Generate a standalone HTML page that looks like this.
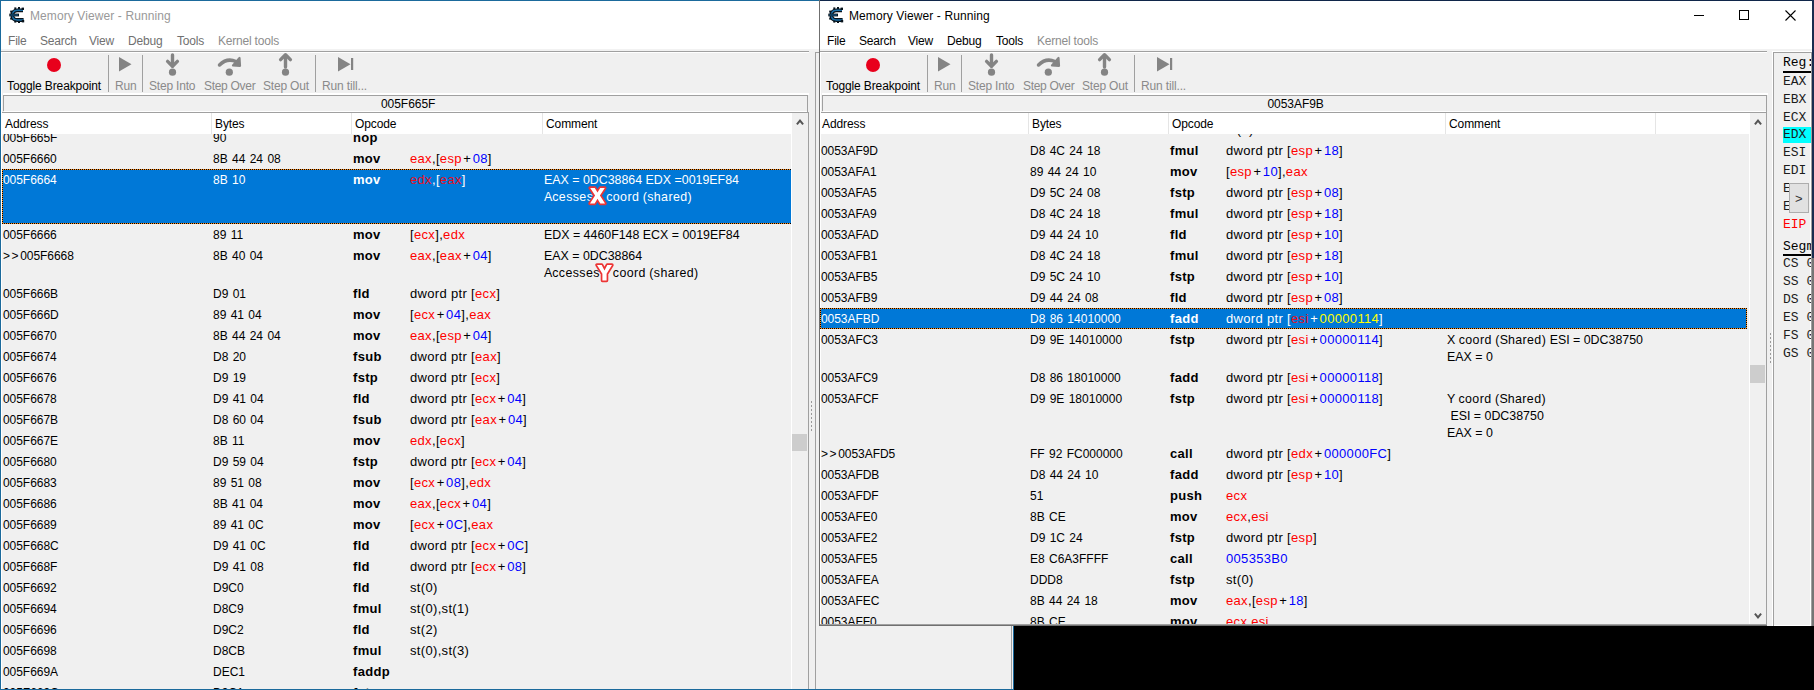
<!DOCTYPE html><html><head><meta charset="utf-8"><style>
html,body{margin:0;padding:0}
body{width:1814px;height:690px;overflow:hidden;position:relative;background:#000}
.a{position:absolute}
.t{position:absolute;white-space:pre;line-height:20px}
.s{font-family:"Liberation Sans",sans-serif}
.m{font-family:"Liberation Mono",monospace}
.pl{margin:0 1.5px}
</style></head><body>
<div class="a" style="left:0;top:0;width:1014px;height:690px;background:#f0f0f0"></div>
<div class="a" style="left:1px;top:1px;width:1012px;height:48px;background:#ffffff;"></div>
<div class="a" style="left:1px;top:49px;width:1012px;height:2px;background:#f2f2f2;"></div>
<svg class="a" style="left:9px;top:7px" width="16" height="16" viewBox="0 0 16 16"><g fill="none">
<path d="M14 3.3 H8.5 C5 3.3 3.4 5.4 3.4 8.2 C3.4 11 5 13 8.5 13 H14.6" stroke="#08131c" stroke-width="3.8"/>
<path d="M14 3.3 H8.5 C5 3.3 3.4 5.4 3.4 8.2 C3.4 11 5 13 8.5 13 H14.6" stroke="#1b70a8" stroke-width="1.6"/>
<path d="M0.3 8 H10" stroke="#08131c" stroke-width="2.8"/><path d="M1.2 8 H9" stroke="#1b70a8" stroke-width="0.9"/>
</g><g fill="#08131c"><rect x="5.3" y="0.4" width="2" height="2"/><rect x="9" y="0" width="2" height="2"/><rect x="12.6" y="0.6" width="2.4" height="2.4"/>
<rect x="5.3" y="13.6" width="2" height="2"/><rect x="9" y="14" width="2" height="2"/><rect x="12.8" y="13" width="2.4" height="2.4"/><rect x="1.2" y="3.6" width="2" height="2"/><rect x="1.2" y="10.6" width="2" height="2"/></g></svg>
<div class="t s" style="left:30px;top:6px;font-size:12px;color:#999999;letter-spacing:0.1px;">Memory Viewer - Running</div>
<div class="t s" style="left:8px;top:31px;font-size:12px;color:#707070;letter-spacing:-0.2px;">File</div>
<div class="t s" style="left:40px;top:31px;font-size:12px;color:#707070;letter-spacing:-0.2px;">Search</div>
<div class="t s" style="left:89px;top:31px;font-size:12px;color:#707070;letter-spacing:-0.2px;">View</div>
<div class="t s" style="left:128px;top:31px;font-size:12px;color:#707070;letter-spacing:-0.2px;">Debug</div>
<div class="t s" style="left:177px;top:31px;font-size:12px;color:#707070;letter-spacing:-0.2px;">Tools</div>
<div class="t s" style="left:218px;top:31px;font-size:12px;color:#8d8d8d;letter-spacing:-0.2px;">Kernel tools</div>
<div class="a" style="left:1px;top:51px;width:808px;height:1px;background:#a0a0a0;"></div>
<div class="a" style="left:1px;top:52px;width:808px;height:1px;background:#ffffff;"></div>
<div class="a" style="left:46.5px;top:57.5px;width:14px;height:14px;border-radius:50%;background:#e8001c"></div>
<svg class="a" style="left:100px;top:50px" width="270" height="30" viewBox="100 50 270 30">
<polygon points="119,57 131.5,64.3 119,71.6" fill="#848484"/>
<path d="M172.5 55 V66" stroke="#848484" stroke-width="3.4" stroke-linecap="round"/>
<path d="M167.6 61.4 L172.5 66.3 L177.4 61.4" fill="none" stroke="#848484" stroke-width="3.4" stroke-linecap="round" stroke-linejoin="round"/>
<circle cx="172.5" cy="72.2" r="3.6" fill="#848484"/>
<path d="M219.5 65 Q227 57.5 236 61.5" fill="none" stroke="#848484" stroke-width="3.5" stroke-linecap="round"/>
<polygon points="239.5,58 240,65.8 233,65.5" fill="#848484" stroke="#848484" stroke-width="2.2" stroke-linejoin="round"/>
<circle cx="229.3" cy="72.2" r="3.6" fill="#848484"/>
<path d="M285.5 56 V67" stroke="#848484" stroke-width="3.4" stroke-linecap="round"/>
<path d="M280.6 59.6 L285.5 54.7 L290.4 59.6" fill="none" stroke="#848484" stroke-width="3.4" stroke-linecap="round" stroke-linejoin="round"/>
<circle cx="285.5" cy="72.2" r="3.6" fill="#848484"/>
<polygon points="338,57 350.5,64.3 338,71.6" fill="#848484"/>
<rect x="351" y="58" width="2.2" height="12" fill="#848484"/>
</svg>
<div class="t s" style="left:7px;top:76px;font-size:12px;color:#000;letter-spacing:-0.12px;">Toggle Breakpoint</div>
<div class="t s" style="left:115px;top:76px;font-size:12px;color:#8a8a8a;letter-spacing:-0.2px;">Run</div>
<div class="t s" style="left:149px;top:76px;font-size:12px;color:#8a8a8a;letter-spacing:-0.2px;">Step Into</div>
<div class="t s" style="left:204px;top:76px;font-size:12px;color:#8a8a8a;letter-spacing:-0.3px;">Step Over</div>
<div class="t s" style="left:263px;top:76px;font-size:12px;color:#8a8a8a;letter-spacing:-0.2px;">Step Out</div>
<div class="t s" style="left:322px;top:76px;font-size:12px;color:#8a8a8a;letter-spacing:-0.15px;">Run till...</div>
<div class="a" style="left:108px;top:55px;width:1px;height:37px;background:#a0a0a0;"></div>
<div class="a" style="left:142px;top:55px;width:1px;height:37px;background:#a0a0a0;"></div>
<div class="a" style="left:315px;top:55px;width:1px;height:37px;background:#a0a0a0;"></div>
<div class="a" style="left:1px;top:53px;width:1px;height:636px;background:#ffffff;"></div>
<div class="a" style="left:3px;top:93px;width:806px;height:2px;background:#ffffff;"></div>
<div class="a" style="left:3px;top:95px;width:805px;height:1px;background:#a0a0a0;"></div>
<div class="a" style="left:3px;top:95px;width:1px;height:16px;background:#a0a0a0;"></div>
<div class="a" style="left:807px;top:95px;width:1px;height:17px;background:#a0a0a0;"></div>
<div class="a" style="left:4px;top:111px;width:803px;height:1px;background:#ffffff;"></div>
<div class="t s" style="left:381px;top:94px;font-size:12px;color:#000;letter-spacing:-0.05px;">005F665F</div>
<div class="a" style="left:2px;top:112px;width:807px;height:1px;background:#a0a0a0;"></div>
<div class="a" style="left:808px;top:112px;width:1px;height:577px;background:#a0a0a0;"></div>
<div class="a" style="left:2px;top:113px;width:789px;height:21px;background:#ffffff;"></div>
<div class="a" style="left:211px;top:113px;width:1px;height:21px;background:#e5e5e5;"></div>
<div class="a" style="left:351px;top:113px;width:1px;height:21px;background:#e5e5e5;"></div>
<div class="a" style="left:542px;top:113px;width:1px;height:21px;background:#e5e5e5;"></div>
<div class="t s" style="left:5px;top:114px;font-size:12px;color:#000;letter-spacing:-0.1px;">Address</div>
<div class="t s" style="left:215px;top:114px;font-size:12px;color:#000;letter-spacing:-0.1px;">Bytes</div>
<div class="t s" style="left:355px;top:114px;font-size:12px;color:#000;letter-spacing:-0.1px;">Opcode</div>
<div class="t s" style="left:546px;top:114px;font-size:12px;color:#000;letter-spacing:-0.1px;">Comment</div>
<div class="a" style="left:791px;top:113px;width:1px;height:576px;background:#ffffff;"></div>
<div class="a" style="left:792px;top:113px;width:16px;height:576px;background:#f0f0f0;"></div>
<svg class="a" style="left:796px;top:118px" width="8" height="8"><path d="M0.9 6.3 L4 2.6 L7.1 6.3" fill="none" stroke="#555" stroke-width="2"/></svg>
<div class="a" style="left:792px;top:434px;width:15px;height:17px;background:#cdcdcd;"></div>
<div class="a" style="left:811px;top:401px;width:1px;height:2px;background:#9a9a9a;"></div>
<div class="a" style="left:811px;top:405px;width:1px;height:2px;background:#9a9a9a;"></div>
<div class="a" style="left:811px;top:409px;width:1px;height:2px;background:#9a9a9a;"></div>
<div class="a" style="left:811px;top:413px;width:1px;height:2px;background:#9a9a9a;"></div>
<div class="a" style="left:811px;top:417px;width:1px;height:2px;background:#9a9a9a;"></div>
<div class="a" style="left:811px;top:421px;width:1px;height:2px;background:#9a9a9a;"></div>
<div class="a" style="left:811px;top:425px;width:1px;height:2px;background:#9a9a9a;"></div>
<div class="a" style="left:811px;top:429px;width:1px;height:2px;background:#9a9a9a;"></div>
<div class="a" style="left:815px;top:52px;width:1px;height:637px;background:#a0a0a0;"></div>
<div class="a" style="left:815px;top:52px;width:198px;height:1px;background:#a0a0a0;"></div>
<div class="a" style="left:1011px;top:52px;width:1px;height:637px;background:#a0a0a0;"></div>
<div class="a" style="left:2px;top:134px;width:789px;height:555px;overflow:hidden;">
<div class="t s" style="left:1px;top:-6px;font-size:12px;color:#000;letter-spacing:-0.05px;">005F665F</div>
<div class="t s" style="left:211px;top:-6px;font-size:12px;color:#000;word-spacing:1px;">90</div>
<div class="t s" style="left:351px;top:-6px;font-size:13px;color:#000;font-weight:bold;letter-spacing:0.3px;">nop</div>
<div class="t s" style="left:1px;top:15px;font-size:12px;color:#000;letter-spacing:-0.05px;">005F6660</div>
<div class="t s" style="left:211px;top:15px;font-size:12px;color:#000;word-spacing:1px;">8B 44 24 08</div>
<div class="t s" style="left:351px;top:15px;font-size:13px;color:#000;font-weight:bold;letter-spacing:0.3px;">mov</div>
<div class="t s" style="left:408px;top:15px;font-size:13px;color:#000;letter-spacing:0.33px;"><span style="color:#ff0000">eax</span>,[<span style="color:#ff0000">esp</span><span class="pl">+</span><span style="color:#0000ff">08</span>]</div>
<div class="a" style="left:0px;top:35px;width:790px;height:55px;background:#0078d7;"></div>
<div class="a" style="left:0px;top:35px;width:790px;height:1px;background:repeating-linear-gradient(90deg,#000 0 1px,#ff8c1a 1px 2px)"></div>
<div class="a" style="left:0px;top:89px;width:790px;height:1px;background:repeating-linear-gradient(90deg,#000 0 1px,#ff8c1a 1px 2px)"></div>
<div class="a" style="left:0px;top:35px;width:1px;height:55px;background:repeating-linear-gradient(180deg,#000 0 1px,#ff8c1a 1px 2px)"></div>
<div class="t s" style="left:1px;top:36px;font-size:12px;color:#fff;letter-spacing:-0.05px;">005F6664</div>
<div class="t s" style="left:211px;top:36px;font-size:12px;color:#fff;word-spacing:1px;">8B 10</div>
<div class="t s" style="left:351px;top:36px;font-size:13px;color:#fff;font-weight:bold;letter-spacing:0.3px;">mov</div>
<div class="t s" style="left:408px;top:36px;font-size:13px;color:#fff;letter-spacing:0.33px;"><span style="color:#e8101e">edx</span>,[<span style="color:#e8101e">eax</span>]</div>
<div class="t s" style="left:542px;top:36px;font-size:12.4px;color:#fff;">EAX = 0DC38864 EDX =0019EF84</div>
<div class="t s" style="left:542px;top:53px;font-size:12.4px;color:#fff;">A<span style="letter-spacing:0.4px">cesses</span><span style="display:inline-block;width:13px"></span><span style="letter-spacing:0.4px">coord</span> <span style="letter-spacing:0.4px">(shared)</span></div>
<div class="t s" style="left:1px;top:91px;font-size:12px;color:#000;letter-spacing:-0.05px;">005F6666</div>
<div class="t s" style="left:211px;top:91px;font-size:12px;color:#000;word-spacing:1px;">89 11</div>
<div class="t s" style="left:351px;top:91px;font-size:13px;color:#000;font-weight:bold;letter-spacing:0.3px;">mov</div>
<div class="t s" style="left:408px;top:91px;font-size:13px;color:#000;letter-spacing:0.33px;">[<span style="color:#ff0000">ecx</span>],<span style="color:#ff0000">edx</span></div>
<div class="t s" style="left:542px;top:91px;font-size:12.4px;color:#000;">EDX = 4460F148 ECX = 0019EF84</div>
<div class="t s" style="left:1px;top:112px;font-size:12px;color:#000;letter-spacing:-0.05px;"><span style="letter-spacing:1.6px">>></span>005F6668</div>
<div class="t s" style="left:211px;top:112px;font-size:12px;color:#000;word-spacing:1px;">8B 40 04</div>
<div class="t s" style="left:351px;top:112px;font-size:13px;color:#000;font-weight:bold;letter-spacing:0.3px;">mov</div>
<div class="t s" style="left:408px;top:112px;font-size:13px;color:#000;letter-spacing:0.33px;"><span style="color:#ff0000">eax</span>,[<span style="color:#ff0000">eax</span><span class="pl">+</span><span style="color:#0000ff">04</span>]</div>
<div class="t s" style="left:542px;top:112px;font-size:12.4px;color:#000;">EAX = 0DC38864</div>
<div class="t s" style="left:542px;top:129px;font-size:12.4px;color:#000;">A<span style="letter-spacing:0.4px">ccesses</span><span style="display:inline-block;width:13px"></span><span style="letter-spacing:0.4px">coord</span> <span style="letter-spacing:0.4px">(shared)</span></div>
<div class="t s" style="left:1px;top:150px;font-size:12px;color:#000;letter-spacing:-0.05px;">005F666B</div>
<div class="t s" style="left:211px;top:150px;font-size:12px;color:#000;word-spacing:1px;">D9 01</div>
<div class="t s" style="left:351px;top:150px;font-size:13px;color:#000;font-weight:bold;letter-spacing:0.3px;">fld</div>
<div class="t s" style="left:408px;top:150px;font-size:13px;color:#000;letter-spacing:0.33px;">dword ptr [<span style="color:#ff0000">ecx</span>]</div>
<div class="t s" style="left:1px;top:171px;font-size:12px;color:#000;letter-spacing:-0.05px;">005F666D</div>
<div class="t s" style="left:211px;top:171px;font-size:12px;color:#000;word-spacing:1px;">89 41 04</div>
<div class="t s" style="left:351px;top:171px;font-size:13px;color:#000;font-weight:bold;letter-spacing:0.3px;">mov</div>
<div class="t s" style="left:408px;top:171px;font-size:13px;color:#000;letter-spacing:0.33px;">[<span style="color:#ff0000">ecx</span><span class="pl">+</span><span style="color:#0000ff">04</span>],<span style="color:#ff0000">eax</span></div>
<div class="t s" style="left:1px;top:192px;font-size:12px;color:#000;letter-spacing:-0.05px;">005F6670</div>
<div class="t s" style="left:211px;top:192px;font-size:12px;color:#000;word-spacing:1px;">8B 44 24 04</div>
<div class="t s" style="left:351px;top:192px;font-size:13px;color:#000;font-weight:bold;letter-spacing:0.3px;">mov</div>
<div class="t s" style="left:408px;top:192px;font-size:13px;color:#000;letter-spacing:0.33px;"><span style="color:#ff0000">eax</span>,[<span style="color:#ff0000">esp</span><span class="pl">+</span><span style="color:#0000ff">04</span>]</div>
<div class="t s" style="left:1px;top:213px;font-size:12px;color:#000;letter-spacing:-0.05px;">005F6674</div>
<div class="t s" style="left:211px;top:213px;font-size:12px;color:#000;word-spacing:1px;">D8 20</div>
<div class="t s" style="left:351px;top:213px;font-size:13px;color:#000;font-weight:bold;letter-spacing:0.3px;">fsub</div>
<div class="t s" style="left:408px;top:213px;font-size:13px;color:#000;letter-spacing:0.33px;">dword ptr [<span style="color:#ff0000">eax</span>]</div>
<div class="t s" style="left:1px;top:234px;font-size:12px;color:#000;letter-spacing:-0.05px;">005F6676</div>
<div class="t s" style="left:211px;top:234px;font-size:12px;color:#000;word-spacing:1px;">D9 19</div>
<div class="t s" style="left:351px;top:234px;font-size:13px;color:#000;font-weight:bold;letter-spacing:0.3px;">fstp</div>
<div class="t s" style="left:408px;top:234px;font-size:13px;color:#000;letter-spacing:0.33px;">dword ptr [<span style="color:#ff0000">ecx</span>]</div>
<div class="t s" style="left:1px;top:255px;font-size:12px;color:#000;letter-spacing:-0.05px;">005F6678</div>
<div class="t s" style="left:211px;top:255px;font-size:12px;color:#000;word-spacing:1px;">D9 41 04</div>
<div class="t s" style="left:351px;top:255px;font-size:13px;color:#000;font-weight:bold;letter-spacing:0.3px;">fld</div>
<div class="t s" style="left:408px;top:255px;font-size:13px;color:#000;letter-spacing:0.33px;">dword ptr [<span style="color:#ff0000">ecx</span><span class="pl">+</span><span style="color:#0000ff">04</span>]</div>
<div class="t s" style="left:1px;top:276px;font-size:12px;color:#000;letter-spacing:-0.05px;">005F667B</div>
<div class="t s" style="left:211px;top:276px;font-size:12px;color:#000;word-spacing:1px;">D8 60 04</div>
<div class="t s" style="left:351px;top:276px;font-size:13px;color:#000;font-weight:bold;letter-spacing:0.3px;">fsub</div>
<div class="t s" style="left:408px;top:276px;font-size:13px;color:#000;letter-spacing:0.33px;">dword ptr [<span style="color:#ff0000">eax</span><span class="pl">+</span><span style="color:#0000ff">04</span>]</div>
<div class="t s" style="left:1px;top:297px;font-size:12px;color:#000;letter-spacing:-0.05px;">005F667E</div>
<div class="t s" style="left:211px;top:297px;font-size:12px;color:#000;word-spacing:1px;">8B 11</div>
<div class="t s" style="left:351px;top:297px;font-size:13px;color:#000;font-weight:bold;letter-spacing:0.3px;">mov</div>
<div class="t s" style="left:408px;top:297px;font-size:13px;color:#000;letter-spacing:0.33px;"><span style="color:#ff0000">edx</span>,[<span style="color:#ff0000">ecx</span>]</div>
<div class="t s" style="left:1px;top:318px;font-size:12px;color:#000;letter-spacing:-0.05px;">005F6680</div>
<div class="t s" style="left:211px;top:318px;font-size:12px;color:#000;word-spacing:1px;">D9 59 04</div>
<div class="t s" style="left:351px;top:318px;font-size:13px;color:#000;font-weight:bold;letter-spacing:0.3px;">fstp</div>
<div class="t s" style="left:408px;top:318px;font-size:13px;color:#000;letter-spacing:0.33px;">dword ptr [<span style="color:#ff0000">ecx</span><span class="pl">+</span><span style="color:#0000ff">04</span>]</div>
<div class="t s" style="left:1px;top:339px;font-size:12px;color:#000;letter-spacing:-0.05px;">005F6683</div>
<div class="t s" style="left:211px;top:339px;font-size:12px;color:#000;word-spacing:1px;">89 51 08</div>
<div class="t s" style="left:351px;top:339px;font-size:13px;color:#000;font-weight:bold;letter-spacing:0.3px;">mov</div>
<div class="t s" style="left:408px;top:339px;font-size:13px;color:#000;letter-spacing:0.33px;">[<span style="color:#ff0000">ecx</span><span class="pl">+</span><span style="color:#0000ff">08</span>],<span style="color:#ff0000">edx</span></div>
<div class="t s" style="left:1px;top:360px;font-size:12px;color:#000;letter-spacing:-0.05px;">005F6686</div>
<div class="t s" style="left:211px;top:360px;font-size:12px;color:#000;word-spacing:1px;">8B 41 04</div>
<div class="t s" style="left:351px;top:360px;font-size:13px;color:#000;font-weight:bold;letter-spacing:0.3px;">mov</div>
<div class="t s" style="left:408px;top:360px;font-size:13px;color:#000;letter-spacing:0.33px;"><span style="color:#ff0000">eax</span>,[<span style="color:#ff0000">ecx</span><span class="pl">+</span><span style="color:#0000ff">04</span>]</div>
<div class="t s" style="left:1px;top:381px;font-size:12px;color:#000;letter-spacing:-0.05px;">005F6689</div>
<div class="t s" style="left:211px;top:381px;font-size:12px;color:#000;word-spacing:1px;">89 41 0C</div>
<div class="t s" style="left:351px;top:381px;font-size:13px;color:#000;font-weight:bold;letter-spacing:0.3px;">mov</div>
<div class="t s" style="left:408px;top:381px;font-size:13px;color:#000;letter-spacing:0.33px;">[<span style="color:#ff0000">ecx</span><span class="pl">+</span><span style="color:#0000ff">0C</span>],<span style="color:#ff0000">eax</span></div>
<div class="t s" style="left:1px;top:402px;font-size:12px;color:#000;letter-spacing:-0.05px;">005F668C</div>
<div class="t s" style="left:211px;top:402px;font-size:12px;color:#000;word-spacing:1px;">D9 41 0C</div>
<div class="t s" style="left:351px;top:402px;font-size:13px;color:#000;font-weight:bold;letter-spacing:0.3px;">fld</div>
<div class="t s" style="left:408px;top:402px;font-size:13px;color:#000;letter-spacing:0.33px;">dword ptr [<span style="color:#ff0000">ecx</span><span class="pl">+</span><span style="color:#0000ff">0C</span>]</div>
<div class="t s" style="left:1px;top:423px;font-size:12px;color:#000;letter-spacing:-0.05px;">005F668F</div>
<div class="t s" style="left:211px;top:423px;font-size:12px;color:#000;word-spacing:1px;">D9 41 08</div>
<div class="t s" style="left:351px;top:423px;font-size:13px;color:#000;font-weight:bold;letter-spacing:0.3px;">fld</div>
<div class="t s" style="left:408px;top:423px;font-size:13px;color:#000;letter-spacing:0.33px;">dword ptr [<span style="color:#ff0000">ecx</span><span class="pl">+</span><span style="color:#0000ff">08</span>]</div>
<div class="t s" style="left:1px;top:444px;font-size:12px;color:#000;letter-spacing:-0.05px;">005F6692</div>
<div class="t s" style="left:211px;top:444px;font-size:12px;color:#000;word-spacing:1px;">D9C0</div>
<div class="t s" style="left:351px;top:444px;font-size:13px;color:#000;font-weight:bold;letter-spacing:0.3px;">fld</div>
<div class="t s" style="left:408px;top:444px;font-size:13px;color:#000;letter-spacing:0.33px;">st(0)</div>
<div class="t s" style="left:1px;top:465px;font-size:12px;color:#000;letter-spacing:-0.05px;">005F6694</div>
<div class="t s" style="left:211px;top:465px;font-size:12px;color:#000;word-spacing:1px;">D8C9</div>
<div class="t s" style="left:351px;top:465px;font-size:13px;color:#000;font-weight:bold;letter-spacing:0.3px;">fmul</div>
<div class="t s" style="left:408px;top:465px;font-size:13px;color:#000;letter-spacing:0.33px;">st(0),st(1)</div>
<div class="t s" style="left:1px;top:486px;font-size:12px;color:#000;letter-spacing:-0.05px;">005F6696</div>
<div class="t s" style="left:211px;top:486px;font-size:12px;color:#000;word-spacing:1px;">D9C2</div>
<div class="t s" style="left:351px;top:486px;font-size:13px;color:#000;font-weight:bold;letter-spacing:0.3px;">fld</div>
<div class="t s" style="left:408px;top:486px;font-size:13px;color:#000;letter-spacing:0.33px;">st(2)</div>
<div class="t s" style="left:1px;top:507px;font-size:12px;color:#000;letter-spacing:-0.05px;">005F6698</div>
<div class="t s" style="left:211px;top:507px;font-size:12px;color:#000;word-spacing:1px;">D8CB</div>
<div class="t s" style="left:351px;top:507px;font-size:13px;color:#000;font-weight:bold;letter-spacing:0.3px;">fmul</div>
<div class="t s" style="left:408px;top:507px;font-size:13px;color:#000;letter-spacing:0.33px;">st(0),st(3)</div>
<div class="t s" style="left:1px;top:528px;font-size:12px;color:#000;letter-spacing:-0.05px;">005F669A</div>
<div class="t s" style="left:211px;top:528px;font-size:12px;color:#000;word-spacing:1px;">DEC1</div>
<div class="t s" style="left:351px;top:528px;font-size:13px;color:#000;font-weight:bold;letter-spacing:0.3px;">faddp</div>
<div class="t s" style="left:1px;top:549px;font-size:12px;color:#000;letter-spacing:-0.05px;">005F669C</div>
<div class="t s" style="left:211px;top:549px;font-size:12px;color:#000;word-spacing:1px;">D9C1</div>
<div class="t s" style="left:351px;top:549px;font-size:13px;color:#000;font-weight:bold;letter-spacing:0.3px;">fstp</div>
</div>
<svg class="a" style="left:588px;top:186px" width="19" height="20"><polygon points="2.2,2 6.8,2 9.5,6.6 12.2,2 16.8,2 11.9,9.6 17,17.5 12.3,17.5 9.5,12.7 6.7,17.5 2,17.5 7.1,9.6" fill="#fff" stroke="#ec3434" stroke-width="3.4" stroke-linejoin="round" paint-order="stroke"/></svg>
<svg class="a" style="left:594.5px;top:262.5px" width="19" height="20"><polygon points="2,2 6.7,2 9.5,7.4 12.3,2 17,2 11.6,10.8 11.6,17.5 7.4,17.5 7.4,10.8" fill="#fff" stroke="#ec3434" stroke-width="3.4" stroke-linejoin="round" paint-order="stroke"/></svg>
<div class="a" style="left:0;top:0;width:1014px;height:690px;box-sizing:border-box;border:1px solid #1b6a9c"></div>
<div class="a" style="left:1014px;top:626px;width:800px;height:64px;background:#000000;"></div>
<div class="a" style="left:819px;top:0px;width:995px;height:626px;overflow:hidden;">
<div class="a" style="left:0px;top:0px;width:995px;height:626px;background:#f0f0f0;"></div>
<div class="a" style="left:1px;top:1px;width:993px;height:48px;background:#ffffff;"></div>
<div class="a" style="left:1px;top:49px;width:993px;height:2px;background:#f2f2f2;"></div>
<svg class="a" style="left:9px;top:7px" width="16" height="16" viewBox="0 0 16 16"><g fill="none">
<path d="M14 3.3 H8.5 C5 3.3 3.4 5.4 3.4 8.2 C3.4 11 5 13 8.5 13 H14.6" stroke="#08131c" stroke-width="3.8"/>
<path d="M14 3.3 H8.5 C5 3.3 3.4 5.4 3.4 8.2 C3.4 11 5 13 8.5 13 H14.6" stroke="#1b70a8" stroke-width="1.6"/>
<path d="M0.3 8 H10" stroke="#08131c" stroke-width="2.8"/><path d="M1.2 8 H9" stroke="#1b70a8" stroke-width="0.9"/>
</g><g fill="#08131c"><rect x="5.3" y="0.4" width="2" height="2"/><rect x="9" y="0" width="2" height="2"/><rect x="12.6" y="0.6" width="2.4" height="2.4"/>
<rect x="5.3" y="13.6" width="2" height="2"/><rect x="9" y="14" width="2" height="2"/><rect x="12.8" y="13" width="2.4" height="2.4"/><rect x="1.2" y="3.6" width="2" height="2"/><rect x="1.2" y="10.6" width="2" height="2"/></g></svg>
<div class="t s" style="left:30px;top:6px;font-size:12px;color:#000;letter-spacing:0.1px;">Memory Viewer - Running</div>
<div class="t s" style="left:8px;top:31px;font-size:12px;color:#000;letter-spacing:-0.2px;">File</div>
<div class="t s" style="left:40px;top:31px;font-size:12px;color:#000;letter-spacing:-0.2px;">Search</div>
<div class="t s" style="left:89px;top:31px;font-size:12px;color:#000;letter-spacing:-0.2px;">View</div>
<div class="t s" style="left:128px;top:31px;font-size:12px;color:#000;letter-spacing:-0.2px;">Debug</div>
<div class="t s" style="left:177px;top:31px;font-size:12px;color:#000;letter-spacing:-0.2px;">Tools</div>
<div class="t s" style="left:218px;top:31px;font-size:12px;color:#8d8d8d;letter-spacing:-0.2px;">Kernel tools</div>
<div class="a" style="left:1px;top:51px;width:947px;height:1px;background:#a0a0a0;"></div>
<div class="a" style="left:1px;top:52px;width:947px;height:1px;background:#ffffff;"></div>
<div class="a" style="left:46.5px;top:57.5px;width:14px;height:14px;border-radius:50%;background:#e8001c"></div>
<svg class="a" style="left:100px;top:50px" width="270" height="30" viewBox="100 50 270 30">
<polygon points="119,57 131.5,64.3 119,71.6" fill="#848484"/>
<path d="M172.5 55 V66" stroke="#848484" stroke-width="3.4" stroke-linecap="round"/>
<path d="M167.6 61.4 L172.5 66.3 L177.4 61.4" fill="none" stroke="#848484" stroke-width="3.4" stroke-linecap="round" stroke-linejoin="round"/>
<circle cx="172.5" cy="72.2" r="3.6" fill="#848484"/>
<path d="M219.5 65 Q227 57.5 236 61.5" fill="none" stroke="#848484" stroke-width="3.5" stroke-linecap="round"/>
<polygon points="239.5,58 240,65.8 233,65.5" fill="#848484" stroke="#848484" stroke-width="2.2" stroke-linejoin="round"/>
<circle cx="229.3" cy="72.2" r="3.6" fill="#848484"/>
<path d="M285.5 56 V67" stroke="#848484" stroke-width="3.4" stroke-linecap="round"/>
<path d="M280.6 59.6 L285.5 54.7 L290.4 59.6" fill="none" stroke="#848484" stroke-width="3.4" stroke-linecap="round" stroke-linejoin="round"/>
<circle cx="285.5" cy="72.2" r="3.6" fill="#848484"/>
<polygon points="338,57 350.5,64.3 338,71.6" fill="#848484"/>
<rect x="351" y="58" width="2.2" height="12" fill="#848484"/>
</svg>
<div class="t s" style="left:7px;top:76px;font-size:12px;color:#000;letter-spacing:-0.12px;">Toggle Breakpoint</div>
<div class="t s" style="left:115px;top:76px;font-size:12px;color:#8a8a8a;letter-spacing:-0.2px;">Run</div>
<div class="t s" style="left:149px;top:76px;font-size:12px;color:#8a8a8a;letter-spacing:-0.2px;">Step Into</div>
<div class="t s" style="left:204px;top:76px;font-size:12px;color:#8a8a8a;letter-spacing:-0.3px;">Step Over</div>
<div class="t s" style="left:263px;top:76px;font-size:12px;color:#8a8a8a;letter-spacing:-0.2px;">Step Out</div>
<div class="t s" style="left:322px;top:76px;font-size:12px;color:#8a8a8a;letter-spacing:-0.15px;">Run till...</div>
<div class="a" style="left:108px;top:55px;width:1px;height:37px;background:#a0a0a0;"></div>
<div class="a" style="left:142px;top:55px;width:1px;height:37px;background:#a0a0a0;"></div>
<div class="a" style="left:315px;top:55px;width:1px;height:37px;background:#a0a0a0;"></div>
<div class="a" style="left:1px;top:53px;width:1px;height:573px;background:#ffffff;"></div>
<div class="a" style="left:3px;top:93px;width:946px;height:2px;background:#ffffff;"></div>
<div class="a" style="left:3px;top:95px;width:945px;height:1px;background:#a0a0a0;"></div>
<div class="a" style="left:3px;top:95px;width:1px;height:16px;background:#a0a0a0;"></div>
<div class="a" style="left:947px;top:95px;width:1px;height:17px;background:#a0a0a0;"></div>
<div class="a" style="left:4px;top:111px;width:943px;height:1px;background:#ffffff;"></div>
<div class="t s" style="left:448.5px;top:94px;font-size:12px;color:#000;letter-spacing:-0.05px;">0053AF9B</div>
<div class="a" style="left:2px;top:112px;width:946px;height:1px;background:#a0a0a0;"></div>
<div class="a" style="left:947px;top:112px;width:1px;height:514px;background:#a0a0a0;"></div>
<div class="a" style="left:1px;top:624px;width:947px;height:1px;background:#a0a0a0;"></div>
<div class="a" style="left:1px;top:625px;width:947px;height:1px;background:#707070;"></div>
<div class="a" style="left:1px;top:113px;width:929px;height:21px;background:#ffffff;"></div>
<div class="a" style="left:209px;top:113px;width:1px;height:21px;background:#e5e5e5;"></div>
<div class="a" style="left:349px;top:113px;width:1px;height:21px;background:#e5e5e5;"></div>
<div class="a" style="left:626px;top:113px;width:1px;height:21px;background:#e5e5e5;"></div>
<div class="a" style="left:836px;top:113px;width:1px;height:21px;background:#e5e5e5;"></div>
<div class="t s" style="left:3px;top:114px;font-size:12px;color:#000;letter-spacing:-0.1px;">Address</div>
<div class="t s" style="left:213px;top:114px;font-size:12px;color:#000;letter-spacing:-0.1px;">Bytes</div>
<div class="t s" style="left:353px;top:114px;font-size:12px;color:#000;letter-spacing:-0.1px;">Opcode</div>
<div class="t s" style="left:630px;top:114px;font-size:12px;color:#000;letter-spacing:-0.1px;">Comment</div>
<div class="a" style="left:930px;top:113px;width:1px;height:511px;background:#ffffff;"></div>
<div class="a" style="left:931px;top:113px;width:16px;height:511px;background:#f0f0f0;"></div>
<svg class="a" style="left:935px;top:118px" width="8" height="8"><path d="M0.9 6.3 L4 2.6 L7.1 6.3" fill="none" stroke="#555" stroke-width="2"/></svg>
<svg class="a" style="left:935px;top:612px" width="8" height="8"><path d="M0.9 1.7 L4 5.4 L7.1 1.7" fill="none" stroke="#555" stroke-width="2"/></svg>
<div class="a" style="left:931px;top:365px;width:15px;height:18px;background:#cdcdcd;"></div>
<div class="a" style="left:951px;top:333px;width:1px;height:2px;background:#9a9a9a;"></div>
<div class="a" style="left:951px;top:337px;width:1px;height:2px;background:#9a9a9a;"></div>
<div class="a" style="left:951px;top:341px;width:1px;height:2px;background:#9a9a9a;"></div>
<div class="a" style="left:951px;top:345px;width:1px;height:2px;background:#9a9a9a;"></div>
<div class="a" style="left:951px;top:349px;width:1px;height:2px;background:#9a9a9a;"></div>
<div class="a" style="left:951px;top:353px;width:1px;height:2px;background:#9a9a9a;"></div>
<div class="a" style="left:951px;top:357px;width:1px;height:2px;background:#9a9a9a;"></div>
<div class="a" style="left:951px;top:361px;width:1px;height:2px;background:#9a9a9a;"></div>
<div class="a" style="left:953px;top:51px;width:40px;height:1px;background:#ffffff;"></div>
<div class="a" style="left:953px;top:51px;width:1px;height:575px;background:#ffffff;"></div>
<div class="a" style="left:954px;top:52px;width:39px;height:1px;background:#a0a0a0;"></div>
<div class="a" style="left:954px;top:52px;width:1px;height:574px;background:#a0a0a0;"></div>
<div class="a" style="left:992px;top:52px;width:1px;height:574px;background:#a0a0a0;"></div>
<div class="a" style="left:991px;top:53px;width:1px;height:572px;background:#ffffff;"></div>
<div class="a" style="left:955px;top:625px;width:37px;height:1px;background:#ffffff;"></div>
<div class="a" style="left:955px;top:53px;width:37px;height:572px;overflow:hidden;">
<div class="t m" style="left:9px;top:0px;font-size:13px;color:#000;">Reg:</div>
<div class="a" style="left:9px;top:18px;width:28px;height:2px;background:#000;"></div>
<div class="t m" style="left:9px;top:19px;font-size:13px;color:#1c1c1c;">EAX</div>
<div class="t m" style="left:9px;top:37px;font-size:13px;color:#1c1c1c;">EBX</div>
<div class="t m" style="left:9px;top:55px;font-size:13px;color:#1c1c1c;">ECX</div>
<div class="a" style="left:9px;top:74px;width:28px;height:16px;background:#00ffff;"></div>
<div class="t m" style="left:9px;top:72px;font-size:13px;color:#1c1c1c;">EDX</div>
<div class="t m" style="left:9px;top:90px;font-size:13px;color:#1c1c1c;">ESI</div>
<div class="t m" style="left:9px;top:108px;font-size:13px;color:#1c1c1c;">EDI</div>
<div class="t m" style="left:9px;top:126px;font-size:13px;color:#1c1c1c;">EBP</div>
<div class="t m" style="left:9px;top:144px;font-size:13px;color:#1c1c1c;">ESP</div>
<div class="t m" style="left:9px;top:162px;font-size:13px;color:#ff0000;">EIP</div>
<div class="t m" style="left:9px;top:184px;font-size:13px;color:#000;">Segm</div>
<div class="a" style="left:9px;top:201px;width:28px;height:2px;background:#000;"></div>
<div class="t m" style="left:9px;top:201px;font-size:13px;color:#1c1c1c;">CS 0023</div>
<div class="t m" style="left:9px;top:219px;font-size:13px;color:#1c1c1c;">SS 002B</div>
<div class="t m" style="left:9px;top:237px;font-size:13px;color:#1c1c1c;">DS 002B</div>
<div class="t m" style="left:9px;top:255px;font-size:13px;color:#1c1c1c;">ES 002B</div>
<div class="t m" style="left:9px;top:273px;font-size:13px;color:#1c1c1c;">FS 0053</div>
<div class="t m" style="left:9px;top:291px;font-size:13px;color:#1c1c1c;">GS 002B</div>
<div class="a" style="left:15px;top:130px;width:20px;height:30px;box-sizing:border-box;background:#e1e1e1;border:1px solid #adadad"></div>
<div class="t s" style="left:21px;top:136px;font-size:13px;color:#333;">&gt;</div>
</div>
<div class="a" style="left:1px;top:134px;width:929px;height:490px;overflow:hidden;">
<div class="t s" style="left:1px;top:-14px;font-size:12px;color:#000;letter-spacing:-0.05px;">0053AF9B</div>
<div class="t s" style="left:210px;top:-14px;font-size:12px;color:#000;word-spacing:1px;">D9C0</div>
<div class="t s" style="left:350px;top:-14px;font-size:13px;color:#000;font-weight:bold;letter-spacing:0.3px;">fld</div>
<div class="t s" style="left:406px;top:-14px;font-size:13px;color:#000;letter-spacing:0.33px;">st(0)</div>
<div class="t s" style="left:1px;top:7px;font-size:12px;color:#000;letter-spacing:-0.05px;">0053AF9D</div>
<div class="t s" style="left:210px;top:7px;font-size:12px;color:#000;word-spacing:1px;">D8 4C 24 18</div>
<div class="t s" style="left:350px;top:7px;font-size:13px;color:#000;font-weight:bold;letter-spacing:0.3px;">fmul</div>
<div class="t s" style="left:406px;top:7px;font-size:13px;color:#000;letter-spacing:0.33px;">dword ptr [<span style="color:#ff0000">esp</span><span class="pl">+</span><span style="color:#0000ff">18</span>]</div>
<div class="t s" style="left:1px;top:28px;font-size:12px;color:#000;letter-spacing:-0.05px;">0053AFA1</div>
<div class="t s" style="left:210px;top:28px;font-size:12px;color:#000;word-spacing:1px;">89 44 24 10</div>
<div class="t s" style="left:350px;top:28px;font-size:13px;color:#000;font-weight:bold;letter-spacing:0.3px;">mov</div>
<div class="t s" style="left:406px;top:28px;font-size:13px;color:#000;letter-spacing:0.33px;">[<span style="color:#ff0000">esp</span><span class="pl">+</span><span style="color:#0000ff">10</span>],<span style="color:#ff0000">eax</span></div>
<div class="t s" style="left:1px;top:49px;font-size:12px;color:#000;letter-spacing:-0.05px;">0053AFA5</div>
<div class="t s" style="left:210px;top:49px;font-size:12px;color:#000;word-spacing:1px;">D9 5C 24 08</div>
<div class="t s" style="left:350px;top:49px;font-size:13px;color:#000;font-weight:bold;letter-spacing:0.3px;">fstp</div>
<div class="t s" style="left:406px;top:49px;font-size:13px;color:#000;letter-spacing:0.33px;">dword ptr [<span style="color:#ff0000">esp</span><span class="pl">+</span><span style="color:#0000ff">08</span>]</div>
<div class="t s" style="left:1px;top:70px;font-size:12px;color:#000;letter-spacing:-0.05px;">0053AFA9</div>
<div class="t s" style="left:210px;top:70px;font-size:12px;color:#000;word-spacing:1px;">D8 4C 24 18</div>
<div class="t s" style="left:350px;top:70px;font-size:13px;color:#000;font-weight:bold;letter-spacing:0.3px;">fmul</div>
<div class="t s" style="left:406px;top:70px;font-size:13px;color:#000;letter-spacing:0.33px;">dword ptr [<span style="color:#ff0000">esp</span><span class="pl">+</span><span style="color:#0000ff">18</span>]</div>
<div class="t s" style="left:1px;top:91px;font-size:12px;color:#000;letter-spacing:-0.05px;">0053AFAD</div>
<div class="t s" style="left:210px;top:91px;font-size:12px;color:#000;word-spacing:1px;">D9 44 24 10</div>
<div class="t s" style="left:350px;top:91px;font-size:13px;color:#000;font-weight:bold;letter-spacing:0.3px;">fld</div>
<div class="t s" style="left:406px;top:91px;font-size:13px;color:#000;letter-spacing:0.33px;">dword ptr [<span style="color:#ff0000">esp</span><span class="pl">+</span><span style="color:#0000ff">10</span>]</div>
<div class="t s" style="left:1px;top:112px;font-size:12px;color:#000;letter-spacing:-0.05px;">0053AFB1</div>
<div class="t s" style="left:210px;top:112px;font-size:12px;color:#000;word-spacing:1px;">D8 4C 24 18</div>
<div class="t s" style="left:350px;top:112px;font-size:13px;color:#000;font-weight:bold;letter-spacing:0.3px;">fmul</div>
<div class="t s" style="left:406px;top:112px;font-size:13px;color:#000;letter-spacing:0.33px;">dword ptr [<span style="color:#ff0000">esp</span><span class="pl">+</span><span style="color:#0000ff">18</span>]</div>
<div class="t s" style="left:1px;top:133px;font-size:12px;color:#000;letter-spacing:-0.05px;">0053AFB5</div>
<div class="t s" style="left:210px;top:133px;font-size:12px;color:#000;word-spacing:1px;">D9 5C 24 10</div>
<div class="t s" style="left:350px;top:133px;font-size:13px;color:#000;font-weight:bold;letter-spacing:0.3px;">fstp</div>
<div class="t s" style="left:406px;top:133px;font-size:13px;color:#000;letter-spacing:0.33px;">dword ptr [<span style="color:#ff0000">esp</span><span class="pl">+</span><span style="color:#0000ff">10</span>]</div>
<div class="t s" style="left:1px;top:154px;font-size:12px;color:#000;letter-spacing:-0.05px;">0053AFB9</div>
<div class="t s" style="left:210px;top:154px;font-size:12px;color:#000;word-spacing:1px;">D9 44 24 08</div>
<div class="t s" style="left:350px;top:154px;font-size:13px;color:#000;font-weight:bold;letter-spacing:0.3px;">fld</div>
<div class="t s" style="left:406px;top:154px;font-size:13px;color:#000;letter-spacing:0.33px;">dword ptr [<span style="color:#ff0000">esp</span><span class="pl">+</span><span style="color:#0000ff">08</span>]</div>
<div class="a" style="left:0px;top:174px;width:927px;height:21px;background:#0078d7;"></div>
<div class="a" style="left:0px;top:174px;width:927px;height:1px;background:repeating-linear-gradient(90deg,#000 0 1px,#ff8c1a 1px 2px)"></div>
<div class="a" style="left:0px;top:194px;width:927px;height:1px;background:repeating-linear-gradient(90deg,#000 0 1px,#ff8c1a 1px 2px)"></div>
<div class="a" style="left:0px;top:174px;width:1px;height:21px;background:repeating-linear-gradient(180deg,#000 0 1px,#ff8c1a 1px 2px)"></div>
<div class="a" style="left:926px;top:174px;width:1px;height:21px;background:repeating-linear-gradient(180deg,#000 0 1px,#ff8c1a 1px 2px)"></div>
<div class="t s" style="left:1px;top:175px;font-size:12px;color:#fff;letter-spacing:-0.05px;">0053AFBD</div>
<div class="t s" style="left:210px;top:175px;font-size:12px;color:#fff;word-spacing:1px;">D8 86 14010000</div>
<div class="t s" style="left:350px;top:175px;font-size:13px;color:#fff;font-weight:bold;letter-spacing:0.3px;">fadd</div>
<div class="t s" style="left:406px;top:175px;font-size:13px;color:#fff;letter-spacing:0.33px;">dword ptr [<span style="color:#e8101e">esi</span><span class="pl">+</span><span style="color:#ffff00">00000114</span>]</div>
<div class="t s" style="left:1px;top:196px;font-size:12px;color:#000;letter-spacing:-0.05px;">0053AFC3</div>
<div class="t s" style="left:210px;top:196px;font-size:12px;color:#000;word-spacing:1px;">D9 9E 14010000</div>
<div class="t s" style="left:350px;top:196px;font-size:13px;color:#000;font-weight:bold;letter-spacing:0.3px;">fstp</div>
<div class="t s" style="left:406px;top:196px;font-size:13px;color:#000;letter-spacing:0.33px;">dword ptr [<span style="color:#ff0000">esi</span><span class="pl">+</span><span style="color:#0000ff">00000114</span>]</div>
<div class="t s" style="left:627px;top:196px;font-size:12.4px;color:#000;">X <span style="letter-spacing:0.4px">coord</span> <span style="letter-spacing:0.4px">(</span>S<span style="letter-spacing:0.4px">hared)</span> ESI = 0DC38750</div>
<div class="t s" style="left:627px;top:213px;font-size:12.4px;color:#000;">EAX = 0</div>
<div class="t s" style="left:1px;top:234px;font-size:12px;color:#000;letter-spacing:-0.05px;">0053AFC9</div>
<div class="t s" style="left:210px;top:234px;font-size:12px;color:#000;word-spacing:1px;">D8 86 18010000</div>
<div class="t s" style="left:350px;top:234px;font-size:13px;color:#000;font-weight:bold;letter-spacing:0.3px;">fadd</div>
<div class="t s" style="left:406px;top:234px;font-size:13px;color:#000;letter-spacing:0.33px;">dword ptr [<span style="color:#ff0000">esi</span><span class="pl">+</span><span style="color:#0000ff">00000118</span>]</div>
<div class="t s" style="left:1px;top:255px;font-size:12px;color:#000;letter-spacing:-0.05px;">0053AFCF</div>
<div class="t s" style="left:210px;top:255px;font-size:12px;color:#000;word-spacing:1px;">D9 9E 18010000</div>
<div class="t s" style="left:350px;top:255px;font-size:13px;color:#000;font-weight:bold;letter-spacing:0.3px;">fstp</div>
<div class="t s" style="left:406px;top:255px;font-size:13px;color:#000;letter-spacing:0.33px;">dword ptr [<span style="color:#ff0000">esi</span><span class="pl">+</span><span style="color:#0000ff">00000118</span>]</div>
<div class="t s" style="left:627px;top:255px;font-size:12.4px;color:#000;">Y <span style="letter-spacing:0.4px">coord</span> <span style="letter-spacing:0.4px">(</span>S<span style="letter-spacing:0.4px">hared)</span></div>
<div class="t s" style="left:627px;top:272px;font-size:12.4px;color:#000;"> ESI = 0DC38750</div>
<div class="t s" style="left:627px;top:289px;font-size:12.4px;color:#000;">EAX = 0</div>
<div class="t s" style="left:1px;top:310px;font-size:12px;color:#000;letter-spacing:-0.05px;"><span style="letter-spacing:1.6px">>></span>0053AFD5</div>
<div class="t s" style="left:210px;top:310px;font-size:12px;color:#000;word-spacing:1px;">FF 92 FC000000</div>
<div class="t s" style="left:350px;top:310px;font-size:13px;color:#000;font-weight:bold;letter-spacing:0.3px;">call</div>
<div class="t s" style="left:406px;top:310px;font-size:13px;color:#000;letter-spacing:0.33px;">dword ptr [<span style="color:#ff0000">edx</span><span class="pl">+</span><span style="color:#0000ff">000000FC</span>]</div>
<div class="t s" style="left:1px;top:331px;font-size:12px;color:#000;letter-spacing:-0.05px;">0053AFDB</div>
<div class="t s" style="left:210px;top:331px;font-size:12px;color:#000;word-spacing:1px;">D8 44 24 10</div>
<div class="t s" style="left:350px;top:331px;font-size:13px;color:#000;font-weight:bold;letter-spacing:0.3px;">fadd</div>
<div class="t s" style="left:406px;top:331px;font-size:13px;color:#000;letter-spacing:0.33px;">dword ptr [<span style="color:#ff0000">esp</span><span class="pl">+</span><span style="color:#0000ff">10</span>]</div>
<div class="t s" style="left:1px;top:352px;font-size:12px;color:#000;letter-spacing:-0.05px;">0053AFDF</div>
<div class="t s" style="left:210px;top:352px;font-size:12px;color:#000;word-spacing:1px;">51</div>
<div class="t s" style="left:350px;top:352px;font-size:13px;color:#000;font-weight:bold;letter-spacing:0.3px;">push</div>
<div class="t s" style="left:406px;top:352px;font-size:13px;color:#000;letter-spacing:0.33px;"><span style="color:#ff0000">ecx</span></div>
<div class="t s" style="left:1px;top:373px;font-size:12px;color:#000;letter-spacing:-0.05px;">0053AFE0</div>
<div class="t s" style="left:210px;top:373px;font-size:12px;color:#000;word-spacing:1px;">8B CE</div>
<div class="t s" style="left:350px;top:373px;font-size:13px;color:#000;font-weight:bold;letter-spacing:0.3px;">mov</div>
<div class="t s" style="left:406px;top:373px;font-size:13px;color:#000;letter-spacing:0.33px;"><span style="color:#ff0000">ecx</span>,<span style="color:#ff0000">esi</span></div>
<div class="t s" style="left:1px;top:394px;font-size:12px;color:#000;letter-spacing:-0.05px;">0053AFE2</div>
<div class="t s" style="left:210px;top:394px;font-size:12px;color:#000;word-spacing:1px;">D9 1C 24</div>
<div class="t s" style="left:350px;top:394px;font-size:13px;color:#000;font-weight:bold;letter-spacing:0.3px;">fstp</div>
<div class="t s" style="left:406px;top:394px;font-size:13px;color:#000;letter-spacing:0.33px;">dword ptr [<span style="color:#ff0000">esp</span>]</div>
<div class="t s" style="left:1px;top:415px;font-size:12px;color:#000;letter-spacing:-0.05px;">0053AFE5</div>
<div class="t s" style="left:210px;top:415px;font-size:12px;color:#000;word-spacing:1px;">E8 C6A3FFFF</div>
<div class="t s" style="left:350px;top:415px;font-size:13px;color:#000;font-weight:bold;letter-spacing:0.3px;">call</div>
<div class="t s" style="left:406px;top:415px;font-size:13px;color:#000;letter-spacing:0.33px;"><span style="color:#0000ff">005353B0</span></div>
<div class="t s" style="left:1px;top:436px;font-size:12px;color:#000;letter-spacing:-0.05px;">0053AFEA</div>
<div class="t s" style="left:210px;top:436px;font-size:12px;color:#000;word-spacing:1px;">DDD8</div>
<div class="t s" style="left:350px;top:436px;font-size:13px;color:#000;font-weight:bold;letter-spacing:0.3px;">fstp</div>
<div class="t s" style="left:406px;top:436px;font-size:13px;color:#000;letter-spacing:0.33px;">st(0)</div>
<div class="t s" style="left:1px;top:457px;font-size:12px;color:#000;letter-spacing:-0.05px;">0053AFEC</div>
<div class="t s" style="left:210px;top:457px;font-size:12px;color:#000;word-spacing:1px;">8B 44 24 18</div>
<div class="t s" style="left:350px;top:457px;font-size:13px;color:#000;font-weight:bold;letter-spacing:0.3px;">mov</div>
<div class="t s" style="left:406px;top:457px;font-size:13px;color:#000;letter-spacing:0.33px;"><span style="color:#ff0000">eax</span>,[<span style="color:#ff0000">esp</span><span class="pl">+</span><span style="color:#0000ff">18</span>]</div>
<div class="t s" style="left:1px;top:478px;font-size:12px;color:#000;letter-spacing:-0.05px;">0053AFF0</div>
<div class="t s" style="left:210px;top:478px;font-size:12px;color:#000;word-spacing:1px;">8B CE</div>
<div class="t s" style="left:350px;top:478px;font-size:13px;color:#000;font-weight:bold;letter-spacing:0.3px;">mov</div>
<div class="t s" style="left:406px;top:478px;font-size:13px;color:#000;letter-spacing:0.33px;"><span style="color:#ff0000">ecx</span>,<span style="color:#ff0000">esi</span></div>
</div>
</div>
<div class="a" style="left:819px;top:0px;width:995px;height:1px;background:#10264a;"></div>
<div class="a" style="left:819px;top:0px;width:1px;height:626px;background:#6f6f6f;"></div>
<div class="a" style="left:1812px;top:0px;width:2px;height:258px;background:#1a2d50;"></div>
<div class="a" style="left:1812px;top:258px;width:2px;height:368px;background:#767676;"></div>
<div class="a" style="left:1694px;top:15px;width:10px;height:1px;background:#000;"></div>
<div class="a" style="left:1739px;top:10px;width:10px;height:10px;box-sizing:border-box;border:1px solid #000"></div>
<svg class="a" style="left:1785px;top:10px" width="11" height="11"><path d="M0.5 0.5 L10.5 10.5 M10.5 0.5 L0.5 10.5" stroke="#000" stroke-width="1.1"/></svg>
</body></html>
